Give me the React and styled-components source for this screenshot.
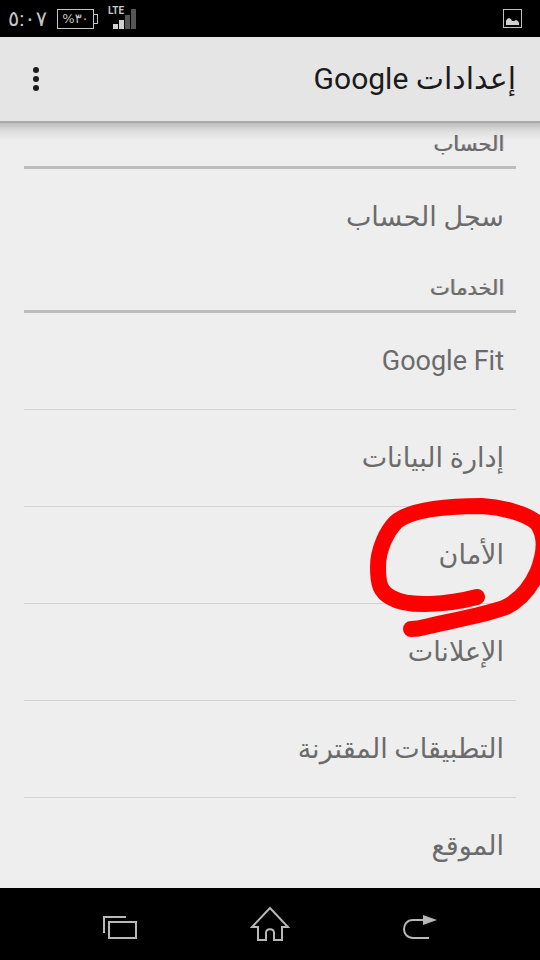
import React from 'react';
import styled, { createGlobalStyle } from 'styled-components';

const GlobalStyle = createGlobalStyle`
  * {
    box-sizing: border-box;
  }
  body {
    margin: 0;
    background-color: #eeeeee;
    font-family: Roboto, "DejaVu Sans", sans-serif;
  }
`;

const Screen = styled.div`
  display: flex;
  flex-direction: column;
  height: 100vh;
  overflow: hidden;
`;

const StatusBar = styled.div`
  display: flex;
  flex: none;
  align-items: center;
  justify-content: space-between;
  height: 37px;
  padding: 0 18px 0 8px;
  background-color: #000;
  color: #c4c4c4;
`;

const StatusGroup = styled.div`
  display: flex;
  align-items: center;
  gap: 10px;
`;

const Clock = styled.time`
  font-size: 21px;
  line-height: 24px;
`;

const Battery = styled.div`
  display: flex;
  align-items: center;
`;

const BatteryBody = styled.span`
  display: flex;
  align-items: center;
  justify-content: center;
  width: 37px;
  height: 20px;
  border: 1px solid #c4c4c4;
  font-family: "DejaVu Sans", sans-serif;
  font-size: 13px;
  line-height: 16px;
`;

const BatteryTip = styled.span`
  width: 4px;
  height: 10px;
  border: 1px solid #c4c4c4;
  border-left: none;
`;

const Network = styled.div`
  display: flex;
  align-items: flex-start;
  height: 28px;
`;

const NetworkLabel = styled.span`
  font-size: 10px;
  font-weight: 700;
  line-height: 12px;
`;

const SignalIcon = styled.svg`
  margin: 4px 0 0 -11px;
`;

const Header = styled.header`
  position: relative;
  z-index: 2;
  display: flex;
  flex: none;
  align-items: center;
  justify-content: space-between;
  height: 84px;
  padding: 0 24px;
  background-color: #e5e5e5;

  &::after {
    content: '';
    position: absolute;
    top: 100%;
    left: 0;
    right: 0;
    height: 18px;
    border-top: 2px solid #a8aaa9;
    background: linear-gradient(rgba(0, 0, 0, 0.2), rgba(0, 0, 0, 0.06) 50%, transparent);
    pointer-events: none;
  }
`;

const Title = styled.h1`
  margin: 0;
  color: #1b1b1b;
  font-size: 30px;
  font-weight: 400;
  line-height: 40px;
`;

const MenuButton = styled.button`
  display: flex;
  align-items: center;
  justify-content: center;
  width: 24px;
  height: 48px;
  padding: 0;
  border: none;
  background: none;
  color: #1b1b1b;
  cursor: pointer;
`;

const Content = styled.main`
  flex: 1;
  min-height: 0;
  padding: 0 24px;
  overflow: hidden;
`;

const SectionTitle = styled.h2`
  height: 48px;
  margin: 0;
  padding: 9px 12px 8px;
  border-bottom: 3px solid #bdbdbd;
  color: #6b6b6b;
  font-size: 21px;
  font-weight: 400;
  line-height: 28px;
  text-shadow: 1px 0 0 rgba(107, 107, 107, 0.6);
`;

const List = styled.ul`
  margin: 0;
  padding: 0;
  list-style: none;
`;

const Item = styled.li`
  position: relative;

  & + & {
    border-top: 1px solid #d3d3d3;
  }
`;

const ItemButton = styled.button`
  display: block;
  width: 100%;
  height: 96px;
  padding: 0 12px;
  border: none;
  background: none;
  color: #6b6b6b;
  font-family: inherit;
  font-size: 27px;
  line-height: 40px;
  text-align: start;
  cursor: pointer;
`;

const Scribble = styled.svg`
  position: absolute;
  z-index: 1;
  top: -16px;
  right: -24px;
  pointer-events: none;
`;

const NavBar = styled.nav`
  display: flex;
  flex: none;
  align-items: center;
  justify-content: center;
  gap: 102px;
  height: 72px;
  background-color: #000;
`;

const NavButton = styled.button`
  display: flex;
  align-items: center;
  justify-content: center;
  width: 48px;
  height: 48px;
  padding: 0;
  border: none;
  background: none;
  color: #b8b8b8;
  cursor: pointer;
`;

const sections = [
  { title: 'الحساب', items: ['سجل الحساب'] },
  {
    title: 'الخدمات',
    items: [
      'Google Fit',
      'إدارة البيانات',
      'الأمان',
      'الإعلانات',
      'التطبيقات المقترنة',
      'الموقع',
    ],
  },
];

const circled = 'الأمان';

const RedCircle = () => (
  <Scribble width="176" height="152" viewBox="364 491 176 152" aria-hidden="true">
    <path
      d="M477 597 C450 604 409 608 392 598 C380 592 378 584 378 567 C378 549 387 531 396 522 C410 510 445 506 482 506 C500 507 526 513 537 523 C547 536 544 555 538 571 C531 587 520 600 506 607 C490 614 440 623 425 627 Q418 629 411 629"
      fill="none"
      stroke="#ff0000"
      strokeWidth="16"
      strokeLinecap="round"
      strokeLinejoin="round"
    />
  </Scribble>
);

const App = () => (
  <Screen dir="rtl" lang="ar">
    <GlobalStyle />

    <StatusBar dir="ltr">
      <StatusGroup>
        <Clock>٥:٠٧</Clock>
        <Battery>
          <BatteryBody>%٣٠</BatteryBody>
          <BatteryTip />
        </Battery>
        <Network>
          <NetworkLabel>LTE</NetworkLabel>
          <SignalIcon width="24" height="22" viewBox="0 0 24 22" aria-hidden="true">
            <path d="M0 15h5v5H0z M6 11h5v9H6z" fill="#d0d0d0" />
            <path d="M12 6h5v14h-5z M18 0h5v20h-5z" fill="#555" />
          </SignalIcon>
        </Network>
      </StatusGroup>
      <svg width="19" height="19" viewBox="0 0 19 19" aria-hidden="true">
        <path d="M0 0h19v19H0z M1 1v17h17V1z" fill="#c0c0c0" fillRule="evenodd" />
        <path d="M3 16v-4l1-2 2-1 2 1 1 2 2 0 2-1 2 1 1 2v2z" fill="#d0d0d0" />
      </svg>
    </StatusBar>

    <Header>
      <Title>إعدادات Google</Title>
      <MenuButton aria-label="خيارات">
        <svg width="8" height="26" viewBox="0 0 8 26" fill="currentColor">
          <circle cx="4" cy="4" r="3" />
          <circle cx="4" cy="13" r="3" />
          <circle cx="4" cy="22" r="3" />
        </svg>
      </MenuButton>
    </Header>

    <Content>
      {sections.map((section) => (
        <section key={section.title}>
          <SectionTitle>{section.title}</SectionTitle>
          <List>
            {section.items.map((item) => (
              <Item key={item}>
                <ItemButton>{item}</ItemButton>
                {item === circled && <RedCircle />}
              </Item>
            ))}
          </List>
        </section>
      ))}
    </Content>

    <NavBar dir="ltr">
      <NavButton aria-label="التطبيقات الأخيرة">
        <svg width="36" height="36" viewBox="0 0 36 36" fill="none" stroke="currentColor" strokeWidth="2">
          <path d="M2 27V11h22" />
          <path d="M7 16h27v16H7z" />
        </svg>
      </NavButton>
      <NavButton aria-label="الرئيسية">
        <svg width="40" height="36" viewBox="0 0 40 36" fill="none" stroke="currentColor" strokeWidth="2">
          <path d="M20 2L2 21h6v13h8v-7c0-5 8-5 8 0v7h8V21h6z" />
        </svg>
      </NavButton>
      <NavButton aria-label="رجوع">
        <svg width="36" height="36" viewBox="0 0 36 36" fill="none" stroke="currentColor" strokeWidth="2">
          <path d="M22 14H11C-1 14 -1 32 11 32h16" />
          <path d="M21 9v10l14-5z" fill="currentColor" stroke="none" />
        </svg>
      </NavButton>
    </NavBar>
  </Screen>
);

export default App;
